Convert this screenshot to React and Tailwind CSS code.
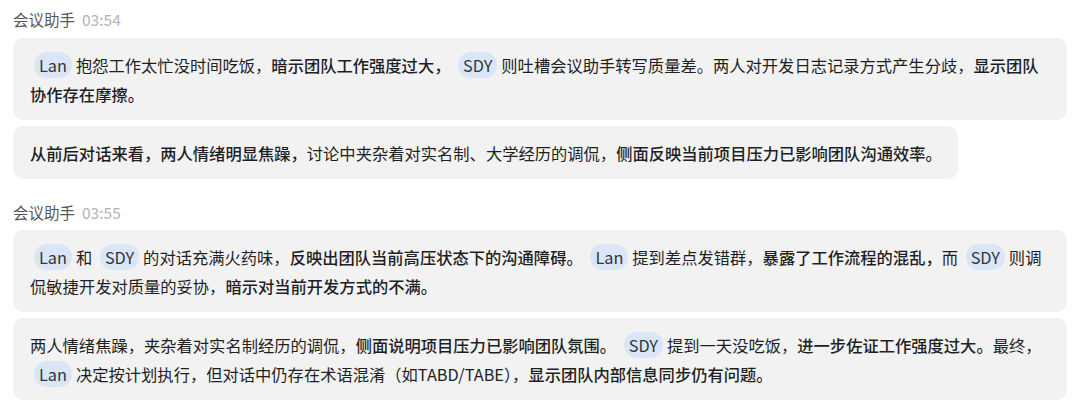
const FONT = { fontFamily: '"Noto Sans CJK SC", "Noto Sans", sans-serif' };

function Mention({ name }) {
  return (
    <span className="inline-block mx-[4px] px-[5px] rounded-full bg-[#dae6f7] text-[#2f3440] leading-[26px]">
      {name}
    </span>
  );
}

function B({ children }) {
  return <span className="font-medium">{children}</span>;
}

function Bubble({ children }) {
  return (
    <div className="w-fit max-w-full rounded-[10px] bg-[#f2f2f2] pl-[17px] pr-[16px] pt-[13px] pb-[11px] text-[16.3px] leading-[29px] text-[#1f1f1f]">
      {children}
    </div>
  );
}

function Header({ time }) {
  return (
    <div className="flex items-baseline gap-[7px] text-[15.5px] leading-[22px]">
      <span className="text-[#585858]">会议助手</span>
      <span className="text-[#b4b4b4]">{time}</span>
    </div>
  );
}

export default function App() {
  return (
    <div style={FONT} className="w-[1080px] h-[412px] bg-white px-[13px] pt-[8px] overflow-hidden">
      <div className="flex flex-col">
        <Header time="03:54" />
        <div className="mt-[8px] flex flex-col gap-[6px]">
          <Bubble>
            <Mention name="Lan" />抱怨工作太忙没时间吃饭，<B>暗示团队工作强度过大，</B> <Mention name="SDY" />则吐槽会议助手转写质量差。两人对开发日志记录方式产生分歧，<B>显示团队协作存在摩擦。</B>
          </Bubble>
          <Bubble>
            <B>从前后对话来看，两人情绪明显焦躁，</B>讨论中夹杂着对实名制、大学经历的调侃，<B>侧面反映当前项目压力已影响团队沟通效率。</B>
          </Bubble>
        </div>
      </div>

      <div className="mt-[22px] flex flex-col">
        <Header time="03:55" />
        <div className="mt-[7px] flex flex-col gap-[6px]">
          <Bubble>
            <Mention name="Lan" />和 <Mention name="SDY" />的对话充满火药味，<B>反映出团队当前高压状态下的沟通障碍。</B> <Mention name="Lan" />提到差点发错群，<B>暴露了工作流程的混乱，</B>而 <Mention name="SDY" />则调侃敏捷开发对质量的妥协，<B>暗示对当前开发方式的不满。</B>
          </Bubble>
          <Bubble>
            两人情绪焦躁，夹杂着对实名制经历的调侃，<B>侧面说明项目压力已影响团队氛围。</B> <Mention name="SDY" />提到一天没吃饭，<B>进一步佐证工作强度过大。</B>最终，<Mention name="Lan" />决定按计划执行，但对话中仍存在术语混淆（如TABD/TABE），<B>显示团队内部信息同步仍有问题。</B>
          </Bubble>
        </div>
      </div>
    </div>
  );
}
